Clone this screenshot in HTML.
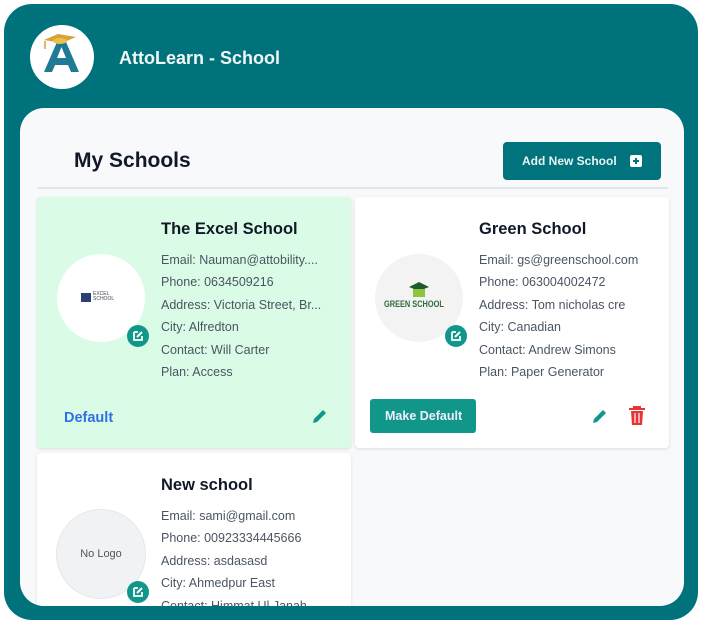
<!DOCTYPE html>
<html><head><style>
*{margin:0;padding:0;box-sizing:border-box}
body{width:704px;height:623px;background:#fff;font-family:"Liberation Sans",sans-serif;position:relative;overflow:hidden}
.frame{position:absolute;left:4px;top:4px;width:694px;height:616px;background:#00727c;border-radius:28px;overflow:hidden}
.logo{position:absolute;left:26px;top:21px;width:64px;height:64px;border-radius:50%;background:#fff}
.title{position:absolute;left:115px;top:44px;color:#f2f6f7;font-size:18px;font-weight:bold}
.panel{position:absolute;left:16px;top:104px;width:664px;height:498px;background:#f7f9fb;border-radius:24px;overflow:hidden}
h1{position:absolute;left:54px;top:41px;font-size:21px;color:#111827}
.add{position:absolute;left:483px;top:34px;width:158px;height:38px;background:#00737c;border-radius:4px;color:#e8f3f4;font-size:12px;font-weight:bold;padding:12px 0 0 19px}
.add i{position:absolute;left:127px;top:13px;width:12px;height:12px;background:#fff;border-radius:2px}
.add i:before{content:"";position:absolute;left:3px;top:5px;width:6px;height:2px;background:#00737c}
.add i:after{content:"";position:absolute;left:5px;top:3px;width:2px;height:6px;background:#00737c}
.div{position:absolute;left:17px;top:79px;width:631px;height:2px;background:#e3e6ea}
.card{position:absolute;width:314px;height:251px;background:#fff;border-radius:4px;box-shadow:0 1px 3px rgba(0,0,0,.12)}
.av{position:absolute;left:20px;top:57px;width:88px;height:88px;border-radius:50%;background:#fff}
.badge{position:absolute;left:90px;top:128px;width:22px;height:22px;border-radius:50%;background:#11968a}
.name{position:absolute;left:124px;top:23px;font-size:16.5px;font-weight:bold;color:#111827}
.info{position:absolute;left:124px;top:52px;font-size:12.5px;color:#4b5563;line-height:22.4px;white-space:nowrap}
</style></head><body>
<div class="frame">
<div class="logo"><svg width="64" height="64" viewBox="0 0 64 64"><path d="M14 47 L27 17 L36 17 L49 47 L41 47 L38 40 L25 40 L22 47Z M27 33 L36 33 L31.5 22Z" fill="#1f7a96"/><path d="M14 15 L28 9 L46 12 L32 18Z" fill="#d9a136"/><ellipse cx="30" cy="16" rx="7" ry="3" fill="#e8c24a"/><path d="M15 16 L15 24" stroke="#d9a136" stroke-width="1.5"/></svg></div>
<div class="title">AttoLearn - School</div>
<div class="panel">
<h1>My Schools</h1>
<div class="add">Add New School<i></i></div>
<div class="div"></div>

<div class="card" style="left:17px;top:89px;background:#dafbe6">
<div class="av"><div style="position:absolute;left:24px;top:39px;width:10px;height:9px;background:#2c3f73"></div><div style="position:absolute;left:36px;top:38px;font-size:5px;color:#445;line-height:5px">EXCEL<br>SCHOOL</div></div>
<div class="badge"><svg width="22" height="22" viewBox="0 0 22 22"><path d="M7 7h4M7 7v8h8v-4" stroke="#fff" stroke-width="1.8" fill="none"/><path d="M10 12l5-5" stroke="#fff" stroke-width="2"/></svg></div>
<div class="name">The Excel School</div>
<div class="info">Email: Nauman@attobility....<br>Phone: 0634509216<br>Address: Victoria Street, Br...<br>City: Alfredton<br>Contact: Will Carter<br>Plan: Access</div>
<div style="position:absolute;left:27px;top:213px;color:#2f6fe8;font-size:14.5px;font-weight:bold">Default</div>
<svg style="position:absolute;left:274px;top:210px" width="18" height="18" viewBox="0 0 18 18"><path d="M2 16l1-4L12 3l3 3-9 9z" fill="#11968a"/></svg>
</div>

<div class="card" style="left:335px;top:89px">
<div class="av" style="background:#f3f3f3"><svg style="position:absolute;left:34px;top:28px" width="20" height="16" viewBox="0 0 20 16"><path d="M0 5L10 0L20 5L10 9Z" fill="#1e5a2e"/><path d="M4 7h12v8H4z" fill="#8cc63f"/></svg><div style="position:absolute;left:9px;top:45px;font-size:9px;font-weight:bold;color:#2d6b3a;transform:scaleX(.82);transform-origin:left">GREEN SCHOOL</div></div>
<div class="badge"><svg width="22" height="22" viewBox="0 0 22 22"><path d="M7 7h4M7 7v8h8v-4" stroke="#fff" stroke-width="1.8" fill="none"/><path d="M10 12l5-5" stroke="#fff" stroke-width="2"/></svg></div>
<div class="name">Green School</div>
<div class="info">Email: gs@greenschool.com<br>Phone: 063004002472<br>Address: Tom nicholas cre<br>City: Canadian<br>Contact: Andrew Simons<br>Plan: Paper Generator</div>
<div style="position:absolute;left:15px;top:202px;width:106px;height:34px;background:#11968a;border-radius:3px;color:#eef;font-size:12.5px;font-weight:bold;padding:10px 0 0 15px">Make Default</div>
<svg style="position:absolute;left:236px;top:210px" width="18" height="18" viewBox="0 0 18 18"><path d="M2 16l1-4L12 3l3 3-9 9z" fill="#11968a"/></svg>
<svg style="position:absolute;left:273px;top:209px" width="18" height="20" viewBox="0 0 18 20"><path d="M1 3h16M6 3V1h6v2" stroke="#e53535" stroke-width="2" fill="none"/><path d="M3 5h12l-1 14H4z" fill="#e53535"/><path d="M7 7v10M11 7v10" stroke="#fff" stroke-width="1.2"/></svg>
</div>

<div class="card" style="left:17px;top:345px">
<div class="av" style="background:#f1f2f3;box-shadow:0 0 0 1px #e5e7eb"><div style="position:absolute;top:38px;width:88px;text-align:center;font-size:11px;color:#555">No Logo</div></div>
<div class="badge"><svg width="22" height="22" viewBox="0 0 22 22"><path d="M7 7h4M7 7v8h8v-4" stroke="#fff" stroke-width="1.8" fill="none"/><path d="M10 12l5-5" stroke="#fff" stroke-width="2"/></svg></div>
<div class="name">New school</div>
<div class="info">Email: sami@gmail.com<br>Phone: 00923334445666<br>Address: asdasasd<br>City: Ahmedpur East<br>Contact: Himmat Ul Janah</div>
</div>
</div>
</div>
</body></html>
